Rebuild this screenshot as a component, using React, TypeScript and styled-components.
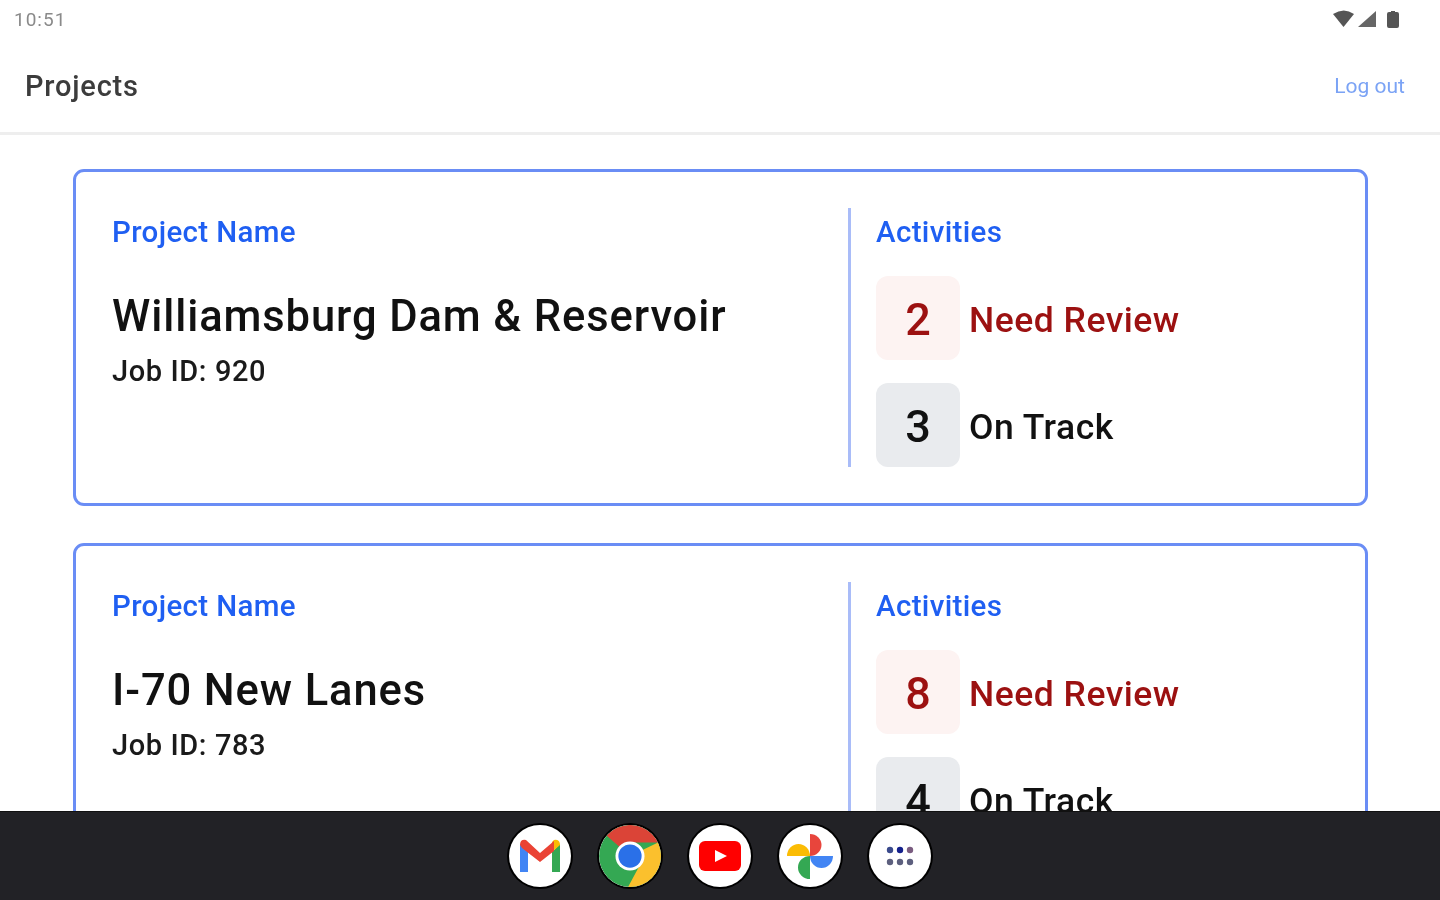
import React from "react";
import styled, { createGlobalStyle } from "styled-components";

const Global = createGlobalStyle`
  html, body { margin: 0; padding: 0; background: #fff; }
  body { font-family: Roboto, "Liberation Sans", sans-serif; }
`;

const Screen = styled.div`
  width: 1440px; height: 900px; display: flex; flex-direction: column; overflow: hidden; background: #fff;
`;
const StatusBar = styled.div`
  height: 38px; flex: none; display: flex; align-items: center; justify-content: space-between;
  padding: 0 38px 0 14px; box-sizing: border-box;
`;
const Clock = styled.span`
  font-size: 19px; letter-spacing: 1px; color: #8a8a8a; filter: blur(0.5px);
`;
const StatusIcons = styled.svg`
  width: 70px; height: 22px; display: block; filter: blur(0.5px);
`;
const Header = styled.header`
  height: 97px; flex: none; box-sizing: border-box; border-bottom: 3px solid #eeeeee;
  display: flex; align-items: center; justify-content: space-between; padding: 0 35px 0 25px;
`;
const Title = styled.h1`
  margin: 1px 0 0; font-size: 29px; font-weight: 500; color: #3c3c3c; letter-spacing: 0.8px; filter: blur(0.5px);
`;
const LogOut = styled.a`
  margin-top: 1px; font-size: 21px; color: #7ba3f5; filter: blur(0.5px);
`;
const Main = styled.main`
  flex: 1; min-height: 0; overflow: hidden; padding: 34px 72px 0 73px;
  display: flex; flex-direction: column; gap: 37px;
`;
const Card = styled.section`
  flex: none; height: 337px; box-sizing: border-box; border: 3px solid #6a8df5; border-radius: 11px;
  padding: 36px; display: grid; grid-template-columns: 736px 1fr;
`;
const Info = styled.div`
  display: flex; flex-direction: column; align-items: flex-start;
`;
const Label = styled.div`
  font-size: 29.5px; line-height: 48px; font-weight: 500; color: #1f5ff2; letter-spacing: 0.35px; filter: blur(0.4px);
`;
const Name = styled.h2`
  margin: 32px 0 0; font-size: 43.5px; line-height: 58px; font-weight: 500; color: #111; letter-spacing: 0.9px; filter: blur(0.4px);
`;
const JobId = styled.div`
  margin-top: 4px; font-size: 29px; line-height: 42px; font-weight: 500; color: #1a1a1a; letter-spacing: 0.6px; filter: blur(0.4px);
`;
const Activities = styled.div`
  border-left: 3px solid #a9bcf8; padding-left: 25px; display: flex; flex-direction: column;
`;
const Rows = styled.div`
  margin-top: 20px; display: flex; flex-direction: column; gap: 23px;
`;
const Row = styled.div`
  display: flex; align-items: center; gap: 9px;
`;
const Count = styled.div<{ $alert?: boolean }>`
  width: 84px; height: 84px; border-radius: 12px; display: flex; align-items: center; justify-content: center;
  font-size: 45px; font-weight: 500; padding-top: 2px; box-sizing: border-box; filter: blur(0.3px);
  background: ${p => (p.$alert ? "#fdf3f2" : "#e9ebee")};
  color: ${p => (p.$alert ? "#9c1111" : "#111")};
`;
const RowLabel = styled.div<{ $alert?: boolean }>`
  font-size: 35.5px; font-weight: 500; letter-spacing: 0.5px; padding-top: 3px; filter: blur(0.4px);
  color: ${p => (p.$alert ? "#9c1111" : "#111")};
`;
const Dock = styled.footer`
  height: 89px; flex: none; background: #222226; display: flex; align-items: center; justify-content: center; gap: 28px;
  border-top: 1px solid #111;  box-sizing: border-box;
`;
const AppIcon = styled.div`
  width: 62px; height: 62px; border-radius: 50%; background: #fff; box-shadow: 0 0 0 2px #000;
  display: flex; align-items: center; justify-content: center; overflow: hidden; filter: blur(0.4px);
`;
const Glyph = styled.svg<{ $size: number }>`
  width: ${p => p.$size}px; height: ${p => p.$size}px; display: block;
`;

const projects = [
  { name: "Williamsburg Dam & Reservoir", id: 920, review: 2, track: 3 },
  { name: "I-70 New Lanes", id: 783, review: 8, track: 4 },
];

export default function App() {
  return (
    <Screen>
      <Global />
      <StatusBar>
        <Clock>10:51</Clock>
        <StatusIcons viewBox="0 0 70 22">
          <path d="M1 6 Q12 -1 22 6 L11.5 19 Z" fill="#555" />
          <path d="M26 19 L44 3 V19 Z" fill="#666" />
          <path d="M55 6 a2 2 0 0 1 2-2 h2 v-1 h4 v1 h2 a2 2 0 0 1 2 2 v12 a2 2 0 0 1-2 2 h-8 a2 2 0 0 1-2-2 Z" fill="#555" />
        </StatusIcons>
      </StatusBar>
      <Header>
        <Title>Projects</Title>
        <LogOut>Log out</LogOut>
      </Header>
      <Main>
        {projects.map(p => (
          <Card key={p.id}>
            <Info>
              <Label>Project Name</Label>
              <Name>{p.name}</Name>
              <JobId>Job ID: {p.id}</JobId>
            </Info>
            <Activities>
              <Label>Activities</Label>
              <Rows>
                <Row>
                  <Count $alert>{p.review}</Count>
                  <RowLabel $alert>Need Review</RowLabel>
                </Row>
                <Row>
                  <Count>{p.track}</Count>
                  <RowLabel>On Track</RowLabel>
                </Row>
              </Rows>
            </Activities>
          </Card>
        ))}
      </Main>
      <Dock>
        <AppIcon>
          <Glyph $size={44} viewBox="0 0 44 44">
            <path d="M2 10 V38 H10 V18 Z" fill="#4285f4" />
            <path d="M34 18 V38 H42 V10 Z" fill="#34a853" />
            <path d="M34 8 V18 L42 11 V10 Q41 5 36 6 Z" fill="#fbbc04" />
            <path d="M2 11 Q2 5 8 6 L22 19 L36 7 L36 17 L22 28 L4 14 Z" fill="#ea4335" />
          </Glyph>
        </AppIcon>
        <AppIcon>
          <Glyph $size={62} viewBox="0 0 64 64">
            <circle cx="32" cy="32" r="32" fill="#34a853" />
            <path d="M32 32 L8 11 A32 32 0 0 1 61 18 L32 18 Z" fill="#db4437" />
            <path d="M32 32 L61 18 A32 32 0 0 1 30 64 L44 38 Z" fill="#fbc02d" />
            <circle cx="32" cy="32" r="15" fill="#fff" />
            <circle cx="32" cy="32" r="12" fill="#2a70e8" />
          </Glyph>
        </AppIcon>
        <AppIcon>
          <Glyph $size={42} viewBox="0 0 42 30">
            <rect width="42" height="30" rx="6" fill="#f00" />
            <path d="M16 9 L28 15 L16 21 Z" fill="#fff" />
          </Glyph>
        </AppIcon>
        <AppIcon>
          <Glyph $size={46} viewBox="0 0 46 46">
            <path d="M23 23 V1 A11.5 11 0 0 1 23 23 Z" fill="#e8453c" />
            <path d="M23 23 H46 A11 11.5 0 0 1 23 23 Z" fill="#4285f4" />
            <path d="M23 23 V46 A11.5 11 0 0 1 23 23 Z" fill="#34a853" />
            <path d="M23 23 H0 A11 11.5 0 0 1 23 23 Z" fill="#fbbc04" />
          </Glyph>
        </AppIcon>
        <AppIcon>
          <Glyph $size={30} viewBox="0 0 30 24">
            <circle cx="5" cy="6" r="3.2" fill="#3a4a8c" />
            <circle cx="15" cy="6" r="3.2" fill="#14208c" />
            <circle cx="25" cy="6" r="3.2" fill="#7a5c80" />
            <circle cx="5" cy="18" r="3.2" fill="#5c5f7e" />
            <circle cx="15" cy="18" r="3.2" fill="#5c5f7e" />
            <circle cx="25" cy="18" r="3.2" fill="#5c5f7e" />
          </Glyph>
        </AppIcon>
      </Dock>
    </Screen>
  );
}
